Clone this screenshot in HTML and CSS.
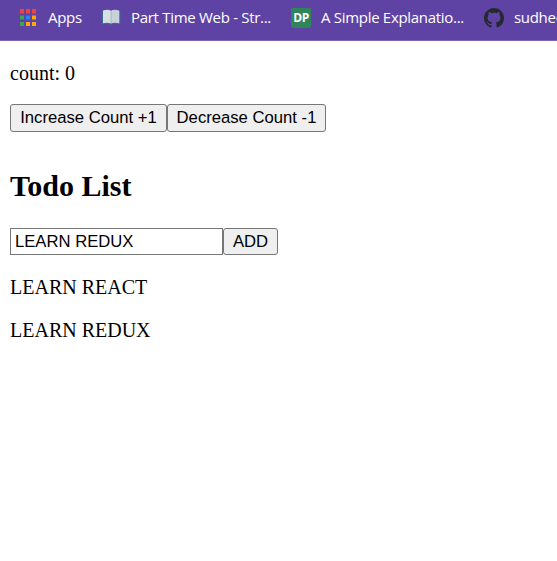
FILE: index.html
```html
<!DOCTYPE html>
<html lang="en">
<head>
<meta charset="utf-8">
<title>Todo List</title>
<link rel="stylesheet" href="styles.css">
</head>
<body>
<nav class="bookmarks">
  <a class="bookmark apps">
    <svg class="icon" viewBox="0 0 20 20">
      <path fill="#f44336" d="M2 1h4v4.5H2zM8 1h4v4.5H8zM14 1h4v4.5h-4z"/>
      <path fill="#34a853" d="M2 7.5h4v4H2zM2 14h4v4H2z"/>
      <path fill="#1e88f5" d="M8 7.5h4v4H8z"/>
      <path fill="#fbaa05" d="M14 7.5h4v4h-4zM8 14h4v4H8zM14 14h4v4h-4z"/>
    </svg>
    <span class="label">Apps</span>
  </a>
  <a class="bookmark book">
    <svg class="icon" viewBox="0 0 20 20">
      <path fill="#386b91" d="M.8 3.5h18.6V16H12l-2 1-2-1H.8z"/>
      <path fill="#d7dfe5" d="M2 2.5q5-1.6 8 .3v12.8q-3-1.5-8-.3z"/>
      <path fill="#c9d2da" d="M10 2.8q3-1.9 8.300-.3v12.8q-5.300-1.200-8.300.3z"/>
      <path fill="none" stroke="#8fa3b3" stroke-width=".6" d="M10 3v12.800"/>
    </svg>
    <span class="label">Part Time Web - Str...</span>
  </a>
  <a class="bookmark simple">
    <span class="icon dp">DP</span>
    <span class="label">A Simple Explanatio...</span>
  </a>
  <a class="bookmark github">
    <svg class="icon" viewBox="0 0 16 16">
      <path fill="#24292e" d="M8 0C3.58 0 0 3.58 0 8c0 3.54 2.29 6.53 5.47 7.59.4.07.55-.17.55-.38 0-.19-.01-.82-.01-1.49-2.01.37-2.53-.49-2.69-.94-.09-.23-.48-.94-.82-1.13-.28-.15-.68-.52-.01-.53.63-.01 1.08.58 1.23.82.72 1.21 1.87.87 2.33.66.07-.52.28-.87.51-1.07-1.78-.2-3.64-.89-3.64-3.95 0-.87.31-1.59.82-2.15-.08-.2-.36-1.02.08-2.12 0 0 .67-.21 2.2.82.64-.18 1.32-.27 2-.27s1.36.09 2 .27c1.53-1.04 2.2-.82 2.2-.82.44 1.1.16 1.92.08 2.12.51.56.82 1.27.82 2.15 0 3.07-1.87 3.75-3.65 3.95.29.25.54.73.54 1.48 0 1.07-.01 1.93-.01 2.2 0 .21.15.46.55.38A8.01 8.01 0 0 0 16 8c0-4.42-3.58-8-8-8z"/>
    </svg>
    <span class="label">sudheer</span>
  </a>
</nav>
<main class="page">
  <p class="text">count: 0</p>
  <div class="row counter">
    <button class="button increase">Increase Count +1</button><button class="button decrease">Decrease Count -1</button>
  </div>
  <h2 class="title">Todo List</h2>
  <div class="row">
    <input class="field" type="text" value="LEARN REDUX"><button class="button add">ADD</button>
  </div>
  <p class="text">LEARN REACT</p>
  <p class="text">LEARN REDUX</p>
</main>
</body>
</html>
```
FILE: styles.css
```css
body {
  margin: 0;
  background: #fff;
  color: #000;
  font-family: "Liberation Serif", serif;
  font-size: 20px;
  overflow: hidden;
}

.bookmarks {
  display: flex;
  box-sizing: border-box;
  height: 41px;
  padding: 8px 0 0 18px;
  background: #5e43a5;
  border-bottom: 1px solid #7b66b5;
  overflow: hidden;
}

.bookmark {
  display: flex;
  flex: none;
  gap: 10px;
  height: 20px;
  color: #fff;
  font: 15px/18px "Open Sans", sans-serif;
  white-space: nowrap;
}

.icon {
  flex: none;
  width: 20px;
  height: 20px;
}

.label { letter-spacing: -0.3px; }

.apps { width: 83px; }
.book { width: 190px; }
.simple { width: 193px; }

.dp {
  border-radius: 2px;
  background: #2f855a;
  font: bold 12px/20px "Open Sans", sans-serif;
  letter-spacing: -0.5px;
  text-align: center;
}

.page {
  display: flow-root;
  padding: 0 10px;
}

.text {
  margin: 21px 0 20px;
  line-height: 23px;
}

.row {
  display: flex;
  height: 27px;
}

.counter {
  height: 28px;
  margin-top: -1px;
}

.text + .counter { margin-top: 19px; }

.text:first-child { margin-bottom: 0; }

.text + .text { margin-top: 20px; }

.title {
  margin: 37px 0 25px;
  font-size: 30px;
  line-height: 34px;
}

.button,
.field {
  box-sizing: border-box;
  height: 100%;
  margin: 0;
  border: 1px solid #767676;
  color: #000;
  font: 16.667px/20px "Liberation Sans", sans-serif;
}

.button {
  padding: 0;
  border-radius: 3px;
  background: #efefef;
}

.increase { width: 157px; }
.decrease { width: 159px; }
.add { width: 55px; }

.field {
  width: 213px;
  padding: 1px 4px;
  background: #fff;
  border-radius: 0;
}
```
